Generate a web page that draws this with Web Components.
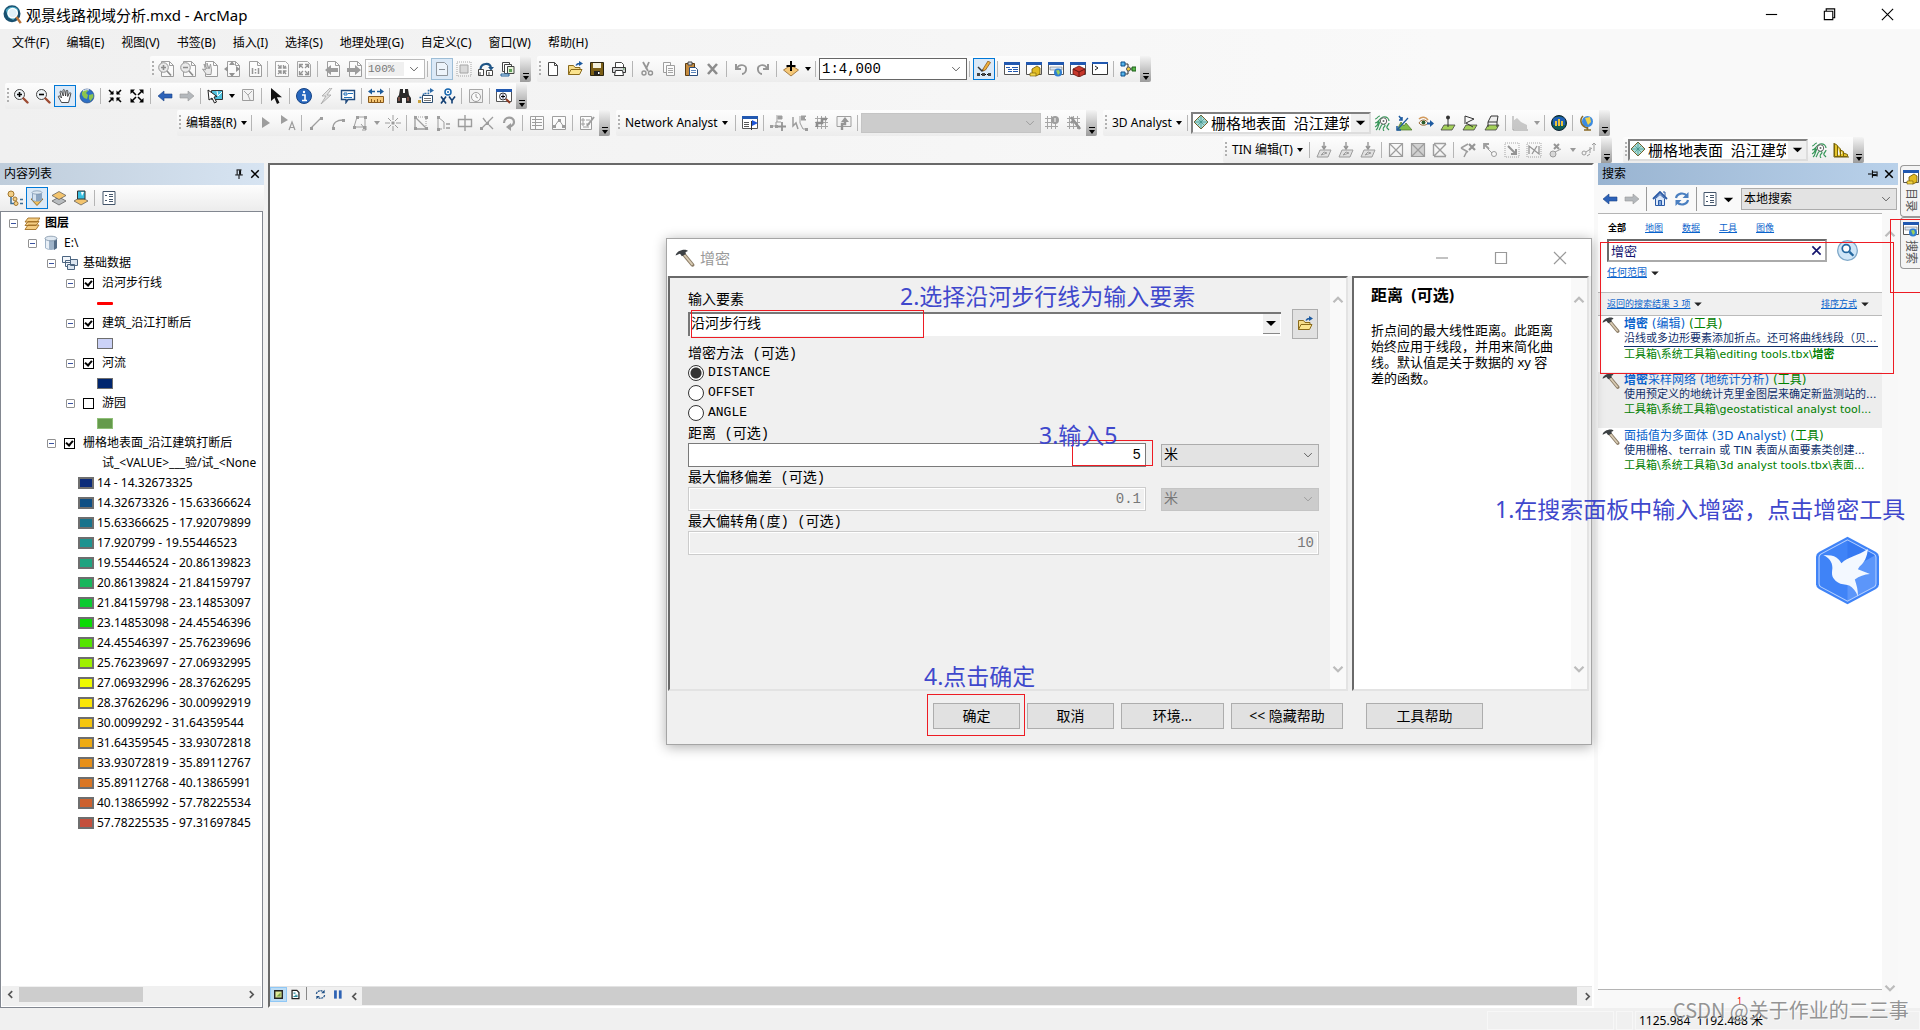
<!DOCTYPE html>
<html lang="zh-CN">
<head>
<meta charset="utf-8">
<title>观景线路视域分析.mxd - ArcMap</title>
<style>
html,body{margin:0;height:100%;overflow:hidden}
body{font:12px/16px "Noto Sans","Noto Sans CJK SC",sans-serif;color:#000}
</style>
</head>
<body>
<arc-app></arc-app>
<script>
const define = (name, css, html) => {
  customElements.define(name, class extends HTMLElement {
    constructor() {
      super();
      this.attachShadow({mode: 'open'});
    }
    connectedCallback() {
      const body = typeof html === 'function' ? html(this) : html;
      this.shadowRoot.innerHTML = `<style>*{box-sizing:border-box}button,input,select{font:inherit;color:inherit;margin:0}${css}</style>${body}`;
    }
  });
};

/* ---------- icons ---------- */
const page = '<path d="M3.5 1.5h6l3 3v10h-9z" fill="#fff" stroke="#444"/><path d="M9.500 1.500v3h3" fill="none" stroke="#444"/>';
const vpage = '<path d="M3.500 .5h8l4 4v11h-12z" fill="#fff" stroke="#444"/><path d="M11.500 .5v4h4" fill="none" stroke="#444"/>';
const dash = '<path d="M1 1h14v14H1z" fill="none" stroke="#555" stroke-dasharray="1 1"/>';
const win = '<path d="M.5 2.500h15v11H.5z" fill="#fff" stroke="#555"/><path d="M0 1h16v3H0z" fill="#2158b0"/>';
const lens = s => `<circle cx="6.500" cy="6.500" r="5" fill="#eef3f6" stroke="#444"/><path d="M10.500 10.500l4 4" stroke="#9c4a32" stroke-width="2.400" stroke-linecap="round"/><path d="${s}" stroke="#000" stroke-width="1.600"/>`;
const diamond = (y, f) => `<path d="M8 ${y}l7 4-7 4-7-4z" fill="${f}" stroke="#555" stroke-width=".7"/>`;
const slab = '<path d="M4 10h11l-3 5H1z" fill="#a4d05a" stroke="#444" stroke-width=".8"/>';
const grid = '<path d="M1 3.500h13M1 7.500h13M1 11.500h13M3.500 1v13M7.500 1v13M11.500 1v13" stroke="#555" fill="none"/>';
const arrows4 = d => `<path d="${d}" stroke="#000" stroke-width="1.600" fill="none"/>`;
const nodes = a => a.map(([x, y]) => `<path d="M${x - 1} ${y - 1}h3v3h-3z" fill="#444"/>`).join('');
const ICONS = {
  app: '<circle cx="8" cy="7" r="6.800" fill="#19506f"/><path d="M3 4c2-3 8-4 10 0l-1 5-3 3-4-2z" fill="#4da9c4"/><circle cx="8.500" cy="6.500" r="3.800" fill="#dff1f8" stroke="#fff"/><path d="M11.500 9.500l3.500 5" stroke="#b97338" stroke-width="2"/>',
  zin: lens('M4 6.500h5M6.500 4v5'), zout: lens('M4 6.500h5'),
  pzin: vpage + '<circle cx="5.500" cy="6.500" r="4.800" fill="#ddd" stroke="#333"/><path d="M3 6.500h5M5.500 4v5M9 10l4 4.500" stroke="#222" stroke-width="1.600"/>',
  pzout: vpage + '<circle cx="5.500" cy="6.500" r="4.800" fill="#ddd" stroke="#333"/><path d="M3 6.500h5M9 10l4 4.500" stroke="#222" stroke-width="1.600"/>',
  hand: '<path d="M4.500 14.500L1.500 9c-.5-1 .7-1.600 1.500-.7L4.500 10 3 4c0-1 1.300-1.200 1.700-.2L6.300 8 6 2.400c0-1.100 1.500-1.100 1.700 0L8.600 8l.6-5c.2-1 1.600-.9 1.600.1L10.700 8.500l1.600-3.400c.5-.9 1.700-.4 1.500.6L12.500 11l-1 3.500z" fill="#fff" stroke="#333" stroke-width=".9"/>',
  phand: vpage + '<path d="M4.500 13.500L.5 8l3 1-1.500-6L5 8V2l2 6 1.500-5 1 6-.5 4.500z" fill="#ddd" stroke="#444"/>',
  pfull: vpage + '<path d="M8 0l3 4H5zM8 16l3-4H5zM0 8l4-3v6zM16 8l-4-3v6z" fill="#333"/>',
  one: vpage + '<path d="M6.500 7v6M12.500 7v6M9.500 8v1.500M9.500 11v1.500" stroke="#333" stroke-width="1.500"/>',
  globe: '<circle cx="8" cy="8" r="7" fill="#2d6fc4" stroke="#1d3f77" stroke-width=".6"/><path d="M3 4c3-3 6-2 6-1L7 5l2 2-1 4-3-1-2-3zM10 7l4-1 .5 3-3 4-1.500-2z" fill="#8cc44e"/><path d="M4 3c2-1.500 5-1.500 6-1" stroke="#fff" fill="none"/>',
  shrink: arrows4('M2 2l4 4M14 2l-4 4M2 14l4-4M14 14l-4-4') + '<path d="M6.500 2.500v4h-4zM9.500 2.500v4h4zM6.500 13.500v-4h-4zM9.500 13.500v-4h4z"/>',
  grow: arrows4('M3 3l4 4M13 3L9 7M3 13l4-4M13 13L9 9') + '<path d="M1.500 1.500h4.500l-4.500 4.500zM14.500 1.500H10l4.500 4.500zM1.500 14.500V10l4.500 4.500zM14.500 14.500V10L10 14.500z"/>',
  pshrink: '<path d="M1.500 .5h10l3 3v12h-13z" fill="#fff" stroke="#555"/><path d="M4 4l3 3M12 5L9.500 7M4 13l3-3M12 13l-2.500-3M7 4v3H4M9.500 4v3h3M7 13v-3H4M9.500 13v-3h3" stroke="#333" stroke-width="1.300"/>',
  pgrow: '<path d="M1.500 .5h10l3 3v12h-13z" fill="#fff" stroke="#555"/><path d="M4 4l3 3M12 4L9 7M4 13l3-3M12 13l-3-3M3.500 7V3.500H7M9 3.500h3.500V7M3.500 10v3.500H7M9 13.500h3.500V10" stroke="#333" stroke-width="1.300"/>',
  back: '<path d="M1 8l6-5v3h8v4H7v3z" fill="#2c62b8" stroke="#1c4486" stroke-width=".6"/>',
  fwd: '<path d="M15 8L9 3v3H1v4h8v3z" fill="#b4b8bc" stroke="#999" stroke-width=".6"/>',
  pback: vpage + '<path d="M1 9l6-5v3h7v4H7v3z" fill="#444"/>', pfwd: vpage + '<path d="M15 9L9 4v3H1v4h8v3z" fill="#444"/>',
  draft: '<path d="M2.500 1.500h8l3 3v10h-11z" fill="#fff" stroke="#444"/><path d="M5 8.500h6" stroke="#333"/>',
  focus: dash + '<path d="M4 4h8v8H4z" fill="#bbb" stroke="#555"/>',
  swap: '<path d="M2.500 8C3 2 12 1 13 7" stroke="#1f5586" stroke-width="2.200" fill="none"/><path d="M10 6h6l-3 3.500z" fill="#1f5586"/><path d="M.5 8.500h5v6h-5z" fill="#fff" stroke="#444"/><path d="M8.500 9.500h6v5h-6z" fill="#fff" stroke="#444"/><path d="M2 14V11M11 14v-3" stroke="#444"/>',
  ddp: '<path d="M2.500 1.500h7v9h-7z" fill="#fff" stroke="#444"/><path d="M4.500 3.500h7v9h-7z" fill="#fff" stroke="#444"/><path d="M7.500 5.500h6.500v7H7.500z" fill="#e8f3dc" stroke="#444"/><path d="M9 8h3v3H9z" fill="#5fa15a"/><path d="M1 13h8v2H1z" fill="#cde3f5" stroke="#27659b"/>',
  doc: page,
  open: '<path d="M1.500 13.500v-9h5l1.500 2h5v2" fill="#f6dc8a" stroke="#8a6a1a"/><path d="M1.500 13.500L4 8.500h11l-2.500 5z" fill="#fbe48f" stroke="#8a6a1a"/><path d="M9 4.500c1-2 2.500-2 4-2" stroke="#1d5aa0" stroke-width="1.500" fill="none"/><path d="M12 0l4 2.500L12 5z" fill="#1d5aa0"/>',
  save: '<path d="M1.500 1.500h13v13h-13z" fill="#7c5f16" stroke="#2b2410"/><path d="M4 2h8v5H4z" fill="#f4f0dc"/><path d="M5 10h6v4H5z" fill="#222"/><path d="M9 11h1.500v2H9z" fill="#fff"/>',
  print: '<path d="M4.500 6V1.500h6l2 2V6" fill="#fff" stroke="#444"/><path d="M1.500 6.500h13v5h-13z" fill="#d7d9db" stroke="#333"/><path d="M4.500 9.500h7l1 5h-9z" fill="#fff" stroke="#333"/><path d="M12 8h1.500" stroke="#2a8a2a"/>',
  cut: '<path d="M4 1l5 9M10 1L7 8" stroke="#333" stroke-width="1.800"/><circle cx="5" cy="12" r="2" fill="none" stroke="#333" stroke-width="1.400"/><circle cx="11.500" cy="12" r="2" fill="none" stroke="#333" stroke-width="1.400"/>',
  copy: '<path d="M2.500 1.500h7v10h-7z" fill="#fff" stroke="#444"/><path d="M5.500 4.500h8v10h-8z" fill="#fff" stroke="#444"/><path d="M7 7.500h5M7 9.500h5M7 11.500h5" stroke="#555"/>',
  paste: '<path d="M2.500 2.500h9v12h-9z" fill="#c58c40" stroke="#5c3c10"/><path d="M5 1h4v3H5z" fill="#ddd" stroke="#444"/><path d="M6.500 6.500h6l2 2v6h-8z" fill="#fff" stroke="#2a4d7c"/><path d="M8 9.500h5M8 11.500h5" stroke="#5a85bb"/>',
  del: '<path d="M3 3l9 10M12 3L3 13" stroke="#222" stroke-width="2.600"/>',
  undo: '<path d="M3 3v5h5" fill="none" stroke="#333" stroke-width="2"/><path d="M4 7c3-5 10-3 9 2-.3 2-2 4-4 4" fill="none" stroke="#333" stroke-width="1.800"/>',
  redo: '<path d="M13 3v5H8" fill="none" stroke="#333" stroke-width="2"/><path d="M12 7C9 2 2 4 3 9c.3 2 2 4 4 4" fill="none" stroke="#333" stroke-width="1.800"/>',
  add: '<path d="M8 4l7.500 5L8 15 .5 9z" fill="#f5c878" stroke="#93652a" stroke-width=".8"/><path d="M8 0v10M3.500 5h9" stroke="#000" stroke-width="2"/>',
  edit: '<path d="M2 13.500h12" stroke="#000" stroke-dasharray="2 1"/>' + nodes([[2, 13], [7, 13], [13, 13]]) + '<path d="M2 6l4 4 2-2" stroke="#333" stroke-width="1.500" fill="none"/><path d="M7 8l5-8 2.500 1.500L9.500 9 7 10z" fill="#f0b03c" stroke="#7a4a16" stroke-width=".7"/>',
  wtoc: win + '<path d="M2 6.500h4M8 6.500h6M4 8.500h4M9 8.500h5M4 10.500h4M9 10.500h5" stroke="#2158b0"/>',
  wcat: win + '<path d="M6 13V8l5-3 3 2v6l-4 2z" fill="#e2bb22" stroke="#6e5505" stroke-width=".8"/><path d="M4 12h6v3H4z" fill="#f2d648" stroke="#6e5505" stroke-width=".6"/>',
  wsearch: win + '<path d="M2 6h12v3H2z" fill="#dbe7f5" stroke="#777" stroke-width=".6"/><circle cx="10" cy="11.500" r="4" fill="#2f7ed2"/><path d="M8 9.500l3-.5 1 3-2 2z" fill="#9bd05c"/>',
  wtool: win + '<path d="M3 8l6-3 6 3v5l-6 3-6-3z" fill="#c7372b" stroke="#641410" stroke-width=".8"/><path d="M3 8l6 3 6-3M9 11v5" stroke="#641410" fill="none"/>',
  wpy: '<path d="M.5 1.500h15v12H.5z" fill="#fff" stroke="#333"/><path d="M0 1h16v2H0z" fill="#2158b0"/><path d="M3 5l3 2-3 2" stroke="#222" fill="none"/>',
  model: '<path d="M4 3h4v5h4M4 13h4V8" stroke="#333" fill="none"/><path d="M1 1h4v4H1zM1 11h4v4H1z" fill="#54b4ea" stroke="#0e4f8a"/><circle cx="8.500" cy="8" r="2" fill="#f2cc3e" stroke="#555"/><path d="M12 6h4v4h-4z" fill="#58b84a" stroke="#1d5f19"/>',
  selfeat: '<path d="M4.500 2.500h11v9h-11z" fill="#4fc0dd" stroke="#333"/><path d="M10 3l1 5 4-4" stroke="#fff" fill="none"/><path d="M1 2l1 10 3-2 2.500 5 2-1-2.500-5 3-.5z" fill="#fff" stroke="#222"/>',
  clearsel: '<path d="M2.500 1.500h11v11h-11z" fill="#eee" stroke="#444"/><path d="M4 3l4 4 4-4M8 7l2 5" stroke="#555" fill="none"/>',
  ptr: '<path d="M3 0v13l3.500-3 2.500 6 2.500-1.200-2.600-5.500H14z" fill="#111"/>',
  eptr: '<path d="M4 2v11l8-5z" fill="#444"/>', eptra: '<path d="M1 0v9l7-4z" fill="#444"/><path d="M9 15l3-8 3 8M10 12.500h4" stroke="#444" fill="none" stroke-width="1.200"/>',
  info: '<circle cx="8" cy="8" r="7.500" fill="#2767be" stroke="#174485"/><path d="M6 7h3v5M6 12.500h5" stroke="#fff" stroke-width="1.600" fill="none"/><circle cx="8" cy="4" r="1.200" fill="#fff"/>',
  bolt: '<path d="M12 0L4 8h4l-5 8 10-9H9l5-7z" fill="#ccc" stroke="#555" stroke-width=".8"/>',
  html: '<path d="M1.500 2.500h13v9H8l-2 3v-3H1.500z" fill="#fff" stroke="#1f4a7d" stroke-width="1.400"/><path d="M4 5h3v2H4zM8 5.500h5M4 9.500h8" stroke="#1f6fb8" fill="none"/>',
  measure: '<path d="M2 3.500h5M9 3.500h5" stroke="#1c5c9c" stroke-width="1.600"/><path d="M4 .5v6L0 3.500zM12 .5v6l4-3z" fill="#1c5c9c"/><path d="M.5 8.500h15v6H.5z" fill="#f6c774" stroke="#8a5a1c"/><path d="M3.500 11v3M6.500 12v2M9.500 11v3M12.500 12v2" stroke="#8a5a1c"/>',
  find: '<path d="M4 1h3v4h2V1h3l1 6 2 3v5h-5v-5H6v5H1v-5l2-3z" fill="#2b2b2b"/><path d="M3 9v4M12 9v4" stroke="#b96c5b"/>',
  route: '<path d="M1.500 9.500h4v-4h5v-3h3" stroke="#2b6aa8" stroke-dasharray="2 1" fill="none" stroke-width="1.500"/><path d="M12 0l4 2.500L12 5z" fill="#2b6aa8"/><path d="M4.500 7.500h10v7h-10z" fill="#fff" stroke="#2b4d70"/><path d="M6 10.500h7M6 12.500h7" stroke="#777"/><path d="M0 12h3v3H0z" fill="#c9a23c"/>',
  xy: '<circle cx="8" cy="4" r="3" fill="#fff" stroke="#1565ae" stroke-width="1.500"/><circle cx="8" cy="4" r="1" fill="#1565ae"/><path d="M1 8.500l5 7M6 8.500l-5 7M9 8.500l3 4 3-4M12 12v3.500" stroke="#123f73" stroke-width="1.600" fill="none"/>',
  clock: '<path d="M1.500 1.500h13v13h-13z" fill="#eee" stroke="#555"/><circle cx="8" cy="9" r="4.500" fill="#fff" stroke="#444"/><path d="M8 6v3l2 1" stroke="#444" fill="none"/>',
  viewer: win + '<circle cx="7" cy="8.500" r="3.500" fill="#eef" stroke="#333"/><path d="M5 8.500h4M7 6.500v4" stroke="#000"/><path d="M10 11l4 4" stroke="#8c3a24" stroke-width="2"/>',
  line: '<path d="M3 13L13 3" stroke="#444" stroke-width="1.300"/>' + nodes([[3, 13], [13, 3]]),
  arc: '<path d="M3 13C3 8 7 5 13 5" stroke="#444" stroke-width="1.300" fill="none"/>' + nodes([[3, 13], [13, 5]]),
  trace: '<path d="M5 2h8v10H2z" stroke="#444" fill="none"/>' + nodes([[5, 2], [13, 2], [2, 12], [12, 12]]) + '<path d="M9 9l5 6M14 11v4h-4" stroke="#444" fill="none"/>',
  point: '<path d="M8 0v5M8 11v5M0 8h5M11 8h5M3 3l3 3M13 3l-3 3M3 13l3-3M13 13l-3-3" stroke="#444"/><path d="M6.500 6.500h3v3h-3z" fill="#444"/>',
  verts: '<path d="M2 2v12h12zM2 2l12 12" stroke="#444" fill="none" stroke-width="1.300"/><path d="M3 2h10v10" stroke="#444" stroke-dasharray="1 1" fill="none"/>' + nodes([[2, 2], [13, 2], [2, 13], [13, 13]]),
  reshape: '<path d="M3 1v13h4M3 2l6 5v7" stroke="#444" fill="none"/>' + nodes([[3, 2], [3, 14]]) + '<path d="M12 8v2M12 12v2M14 8v2M14 12v2" stroke="#444" stroke-width="1.500"/>',
  cutpoly: '<path d="M1.500 4.500h13v7h-13zM8 0v16" stroke="#444" stroke-width="1.400" fill="none"/>',
  split: '<path d="M2 14L14 2M4 3l3 4M10 10l4 4" stroke="#444" stroke-width="1.300"/>' + nodes([[2, 13], [8, 8]]),
  rotate: '<path d="M3 8c0-7 10-7 10-1 0 3-2 4-5 5" stroke="#444" stroke-width="2.200" fill="none"/><path d="M5 12l5-4v8z" fill="#444"/>',
  attrs: '<path d="M1.500 1.500h13v13h-13z" fill="#fff" stroke="#444"/><path d="M3 4.500h10M3 7.500h10M3 10.500h10M6.500 2v12" stroke="#444"/>',
  sketch: '<path d="M1.500 1.500h13v13h-13z" fill="#fff" stroke="#444"/><path d="M3 12l5-7 5 7" stroke="#444" fill="none"/>' + nodes([[3, 11], [8, 5], [12, 11]]),
  create: '<path d="M1.500 1.500h11v13h-11z" fill="#fff" stroke="#444"/><path d="M3 4h2v2H3zM3 8h2v2H3zM7 5h4M7 9h4M4 12h6" stroke="#444" fill="none"/><path d="M8 11l7-9" stroke="#444" stroke-width="2"/>',
  nawin: win + '<path d="M2 7.500h5M2 9.500h5M2 11.500h5" stroke="#555"/><path d="M9.500 6v9" stroke="#333"/><path d="M10 5l6 3-6 3z" fill="#1f56d8"/>',
  naloc: '<path d="M1 11h5M6 11V7h5" stroke="#444" fill="none"/>' + nodes([[1, 11], [6, 11]]) + '<path d="M7 0v7M8 1h4v3H8z" stroke="#444" fill="#444"/><path d="M12 7v9M8 11.500h8" stroke="#333" stroke-width="1.800"/>',
  nasel: '<path d="M8 1v7M9 1h5l-2 2 2 2H9" fill="#444" stroke="#444"/><path d="M1 2v9l3-3 2 6" stroke="#444" fill="none" stroke-width="1.500"/><path d="M8 8l3 6h4" stroke="#444" fill="none"/>' + nodes([[14, 14]]),
  nasolve: grid + '<path d="M3 12V8h5V4h5" stroke="#222" stroke-width="2.600" fill="none"/>',
  nadir: '<path d="M1 1.500h14v10H1z" fill="#eee" stroke="#444"/><path d="M6 15V9h3V6" stroke="#333" stroke-width="2.400" fill="none"/><path d="M5 7l4-5 4 5z" fill="#333"/>',
  nainfo: grid + '<circle cx="11" cy="5" r="4" fill="#444"/><path d="M11 3v4" stroke="#fff"/>', nabuild: grid + '<path d="M5 2l9 12M8 5l-3 3" stroke="#333" stroke-width="2.600"/>',
  tin: '<path d="M8 1l7 7-7 7-7-7z" fill="#a7dbd6" stroke="#7a5a20"/><path d="M4.500 4.500l7 7M11.500 4.500l-7 7M8 1v14M1 8h14" stroke="#3c8f86" stroke-width=".7"/>',
  contour: '<path d="M1 4c3 0 2-3 5-3M1 8c4 0 3-4 8-6 4-1 6 2 6 4M1 12c3-1 3-4 4-6M2 15c3-2 2-6 4-8M5 15c2-2 1-5 4-6 3 0 2 2 1 3s-1 3 0 4M15 8c0 2-3 3-2 5l2 2" stroke="#38975a" stroke-width="1.200" fill="none"/><circle cx="9.500" cy="6" r="3.200" fill="#fff" stroke="#666"/><circle cx="9.500" cy="6" r="1" fill="#666"/>',
  steep: '<path d="M1 15l4-8 3 4 2-3 6 7z" fill="#7fbd4a" stroke="#47701f" stroke-width=".7"/><path d="M2 14L12 3" stroke="#1d5aa0" stroke-width="1.200"/><path d="M3 1l3 4M6 2v3H3M1 11v4h4" stroke="#1d5aa0" fill="none" stroke-width="1.500"/>',
  los: '<path d="M1 8c2-4 7-4 9 0-2 3-7 3-9 0z" fill="#fff" stroke="#9a6a3a"/><circle cx="5.500" cy="7.500" r="2" fill="#2c5c2a"/><path d="M1 4c3-3 7-2 9 1" stroke="#d29a5c" fill="none" stroke-width="1.500"/><path d="M9 8.500h4" stroke="#1d5aa0" stroke-width="2"/><path d="M12 5l4 3.500-4 3.500z" fill="#1d5aa0"/>',
  ipoint: slab + '<path d="M8 3v9" stroke="#333"/><circle cx="8" cy="2.500" r="2" fill="#333"/>',
  iline: slab + '<path d="M3 1l9 3-8 4 7 4M3 1v8" stroke="#333" fill="none"/>', ipoly: slab + '<path d="M7 1h7l-1 6H4zM4 7v5M13 7v5" stroke="#333" fill="#eee"/>',
  profile: '<path d="M1 1v14h15" stroke="#444" fill="none"/><path d="M1 14V6l4-3 4 4 6 3v4z" fill="#999"/>',
  scene: '<circle cx="8" cy="8" r="7.500" fill="#0f5c56" stroke="#123"/><path d="M2 4c3-3 9-3 12 0v6H2z" fill="#1d5fb4"/><path d="M4 11V6h2v5M7 11V4h2v7M10 11V6h2v5" fill="#e8c43c"/>',
  gl: '<circle cx="8.500" cy="6.500" r="5.500" fill="#3c8ae0"/><path d="M6 3l5-1 1 5-3 3z" fill="#f0d24c"/><path d="M4 1C0 5 2 11 8 13M5 15h7M8.500 12v3" stroke="#8a6a24" stroke-width="1.600" fill="none"/>',
  tinadd: '<path d="M4 8h11l-3 7H1z" fill="#ccc" stroke="#444"/><path d="M5 13l3-3 3 1z" fill="#fff" stroke="#444"/><path d="M8 0v6M6 4l2 3 2-3" stroke="#333" stroke-width="1.400" fill="none"/>',
  xbox: '<path d="M1.500 1.500h13v13h-13zM2 2l12 12M14 2L2 14" stroke="#444" fill="none" stroke-width="1.200"/>',
  xboxf: '<path d="M1.500 1.500h13v13h-13z" fill="#aaa"/><path d="M1.500 1.500h13v13h-13zM2 2l12 12M14 2L2 14" stroke="#444" fill="none" stroke-width="1.200"/>',
  xbox3: '<path d="M2 2l12 12M14 2L2 14M2 14.500h12M2 1.500h12M1.500 2v12" stroke="#444" fill="none" stroke-width="1.400"/>',
  brk: '<path d="M1 6l7-4M1 6l7 4M4 15l3-6" stroke="#444" stroke-width="1.500" fill="none"/><path d="M9 2l6 6M15 2L9 8" stroke="#333" stroke-width="2.200"/>',
  swapn: '<path d="M2 2l5 5M2 7V2h5" stroke="#444" stroke-width="1.800" fill="none"/><circle cx="12" cy="12" r="2.500" fill="#fff" stroke="#444"/><path d="M6 7l4 4" stroke="#444"/>',
  dotbox: dash + '<path d="M4 4l8 8M12 7v5H7" stroke="#333" stroke-width="2" fill="none"/>', dotx: dash + '<path d="M3 12V4l10 8V4M6 12l5-8" stroke="#333" stroke-width="1.300" fill="none"/>',
  delnode: '<circle cx="5" cy="12" r="3" fill="#bbb" stroke="#444"/><path d="M7 10l6-3" stroke="#444"/><path d="M6 2l5 5M11 2L6 7" stroke="#333" stroke-width="2"/>',
  mv: '<circle cx="3" cy="11" r="2" fill="none" stroke="#444"/><path d="M5 10l6-4M13 1v8M11 3l2-2 2 2M6 14l3-2M9 5v6" stroke="#444" fill="none"/>',
  hist: '<path d="M1 1v14h15" stroke="#6b5a0c" fill="none"/><path d="M1.500 14.500V1.500l3 2v11M4.500 4l3 3v7.500M7.500 8l3 1.500v5M10.500 11l4 1.500v2H1.500" fill="#e6c52c" stroke="#7a6508"/>',
  bydraw: '<circle cx="4" cy="4" r="3" fill="#f3cf86" stroke="#a1762e"/><circle cx="8" cy="9" r="2" fill="#f3cf86" stroke="#a1762e"/><circle cx="9" cy="13.500" r="2" fill="#f3cf86" stroke="#a1762e"/><path d="M4 7v6.500h3M13 9.500h3M13 13.500h3" stroke="#3d6d94" stroke-width="1.500" fill="none"/>',
  bysrc: '<path d="M2 9l6 6.500L14 9z" fill="#f0c05c" stroke="#95702c"/><path d="M3 2h10v8c-2 2-8 2-10 0z" fill="#8ba5c2"/><path d="M4 3h3v8l-3-1z" fill="#d4e1ee"/><ellipse cx="8" cy="2.500" rx="5" ry="1.700" fill="#dde8f2" stroke="#66809c" stroke-width=".6"/>',
  byvis: diamond(7, '#b9bdc0') + diamond(1.500, '#f3c46e'),
  bysel: diamond(7, '#f3c46e') + '<path d="M4.500 1h7.500v8H4.500z" fill="#38bfe0" stroke="#333"/><path d="M8 2l3 0-2 4z" fill="#fff"/>',
  opts: '<path d="M2 1.500h12v13H2z" fill="#fff" stroke="#44566b"/><path d="M4 5.500h2M4 10.500h2M8 4.500h4M8 6.500h4M8 9.500h4M8 11.500h4" stroke="#44566b"/>',
  layers: '<path d="M4 3h12l-3 4H1zM4 6.500h11l-3 4H1zM4 10h11l-3 4.500H1z" fill="#f4cd83" stroke="#a16f24" stroke-width=".9"/>',
  db: '<path d="M2 3v10c2 2.600 10 2.600 12 0V3z" fill="#9fb3c8"/><path d="M3 4h3v10l-3-1z" fill="#e9f0f7"/><path d="M11 4h3v9l-3 2z" fill="#566d87"/><ellipse cx="8" cy="3.500" rx="6" ry="2.300" fill="#dfe8f1" stroke="#71869c" stroke-width=".7"/>',
  group: '<path d="M.5 1.500h8v6h-8zM3.500 5.500h8v6h-8z" fill="#f1f5fa" stroke="#4b6480"/><path d="M8.500 4.500h7v6h-7zM5.500 9.500h7v5h-7z" fill="#dbe5f0" stroke="#4b6480"/>',
  home: '<path d="M1 8l7-7 7 7" stroke="#2a5aa6" stroke-width="1.800" fill="none"/><path d="M3.500 7.500L8 3.500l4.500 4v7h-9z" fill="#dce9fb" stroke="#2a5aa6"/><path d="M6.500 9.500h3v5h-3z" fill="#7fa7dd" stroke="#2a5aa6"/><path d="M11 1h2v4" stroke="#2a5aa6" fill="none"/>',
  refresh: '<path d="M2 7c1-5 8-6 11-2M14 9c-1 5-8 6-11 2" stroke="#4a7fc0" stroke-width="2.200" fill="none"/><path d="M14.500 1v6h-6zM1.500 15V9h6z" fill="#4a7fc0"/>',
  mapv: '<path d="M2.500 2.500h11v11h-11z" fill="#dfe89a" stroke="#222" stroke-width="2"/><path d="M5 11l6-6v6z" fill="#7da646"/>',
  lay: '<path d="M3 2h7l3 3v9H3z" fill="#fff" stroke="#222" stroke-width="1.800"/><path d="M5 6h3M7 9h4M5 11h6" stroke="#2a8a9c" stroke-width="1.500"/>',
  rfr: '<path d="M2 7c1-5 8-6 11-2M14 9c-1 5-8 6-11 2" stroke="#1d4f86" stroke-width="1.800" fill="none" stroke-dasharray="3 1"/><path d="M14 1v5H9zM2 15v-5h5z" fill="#1d4f86"/>',
  pause: '<path d="M3 2h4v12H3z" fill="#2d62b4"/><path d="M10 2h4v12h-4z" fill="#2d62b4"/>',
  hammer: '<path d="M7 5l7 8.500" stroke="#8b7c66" stroke-width="3" stroke-linecap="round"/><path d="M7 5l7 8.500" stroke="#d9ccb4" stroke-width="1.400"/><path d="M.5 6C1 3 5 1 9 1.500 11 1.800 10 3 8.500 3.200L8.500 5 5.500 6.500 4 4.500C3 4.800 2 5.500.5 6z" fill="#3d4144"/>',
  mag: '<circle cx="8" cy="8" r="7.500" fill="#cfe6f8" stroke="#7fa8c8"/><circle cx="7" cy="6.500" r="3" fill="#fff" stroke="#23679f" stroke-width="1.300"/><path d="M9.500 9l3 3" stroke="#23679f" stroke-width="1.800"/>',
  pin: '<path d="M4 1.500h8M5 2v7M10.500 2v7M2 9.500h12M8 10v6M9 2v7" stroke="#000" stroke-width="1.600" fill="none"/>',
  pinh: '<path d="M14.500 4v8M14 5H7M14 10.500H7M7 2v12M6 8H0M14 9H7" stroke="#000" stroke-width="1.600" fill="none"/>',
  x: '<path d="M2 2l12 12M14 2L2 14" stroke="currentColor" stroke-width="2.400"/>',
  thinx: '<path d="M2 2l12 12M14 2L2 14" stroke="currentColor" stroke-width="1.200"/>',
  min: '<path d="M2 8h12" stroke="currentColor" stroke-width="1.200"/>', max: '<path d="M2.500 2.500h11v11h-11z" stroke="currentColor" fill="none" stroke-width="1.200"/>',
  restore: '<path d="M2.500 4.500h9v9h-9zM4.500 4V2h9v9.500h-2" stroke="currentColor" fill="none" stroke-width="1.200"/>',
  down: '<path d="M3 6h10l-5 5z" fill="currentColor"/>',
  chu: '<path d="M2 11l6-6 6 6" stroke="currentColor" stroke-width="3" fill="none"/>', chd: '<path d="M2 5l6 6 6-6" stroke="currentColor" stroke-width="3" fill="none"/>',
  chl: '<path d="M11 2L5 8l6 6" stroke="currentColor" stroke-width="3" fill="none"/>', chr: '<path d="M5 2l6 6-6 6" stroke="currentColor" stroke-width="3" fill="none"/>',
  thd: '<path d="M2 5l6 6 6-6" stroke="currentColor" stroke-width="1.500" fill="none"/>',
  bird: '<path d="M8 .2l6.600 3.500q.7.400.7 1.100v6.400q0 .7-.7 1.100L8 15.800 1.400 12.300Q.7 11.900.7 11.200V4.800q0-.7.7-1.100z" fill="#3f83f7"/><path d="M8 8l6.500-3.600v7.400L8 15z" fill="#6fa4fb" opacity=".6"/><path d="M8 8V1l6.500 3.400z" fill="#2f73ee" opacity=".6"/><path d="M8 .9l6.200 3.300q.4.300.4.700v6.200q0 .5-.4.700L8 15.100 1.800 11.800q-.4-.2-.4-.7V4.900q0-.4.4-.7z" fill="none" stroke="#b5d0ff" stroke-width=".25"/><path d="M2.400 4.400L4.200 4.500Q5.600 4.600 6.600 6.300C8 4.800 10.500 4.600 12.700 3c-.1 1.800-.8 3.100-1.900 4.100l-.4.600 2.800 1.100c-1.300.1-2.500.5-3.500 1.300.4 1.300.8 2.500.7 3.900-.4-1.200-1.200-2-2-2.500-1-.3-1.900-.2-2.600-.7C4.300 9.700 4.300 9 4.500 7.400 4.500 5.900 3.600 5 2.400 4.400z" fill="#f3f8ff"/>'
};
define('ui-icon', ':host{display:inline-block;width:16px;height:16px;flex:none}svg{display:block;width:100%;height:100%}',
  el => `<svg viewBox="0 0 16 16" fill="none" aria-hidden="true">${(ICONS[el.getAttribute('name')] || '').replace(/<path d="([^"]*)"\/>/g, '<path d="$1" fill="#000"/>')}</svg>`);

/* ---------- toolbar pieces ---------- */
define('tool-button', `:host{display:block;flex:none}
button{width:22px;height:22px;padding:3px;border:0;background:none;display:block}
:host([active]) button{padding:2px;border:1px solid #0078d7;background:#dbe9f7}
:host([active][disabled]) button{border-color:#9dbdd6}
:host([disabled]) ui-icon{filter:grayscale(1) opacity(.5)}
ui-icon{display:block}`,
  el => `<button type="button" aria-label="${el.getAttribute('icon')}"><ui-icon name="${el.getAttribute('icon')}"></ui-icon></button>`);
define('tool-sep', ':host{display:block;width:6px;flex:none;height:16px}i{display:block;width:1px;height:16px;margin-left:2px;background:#b5b5b5}', '<i></i>');
define('tool-arrow', ':host{display:block;flex:none}button{width:11px;height:22px;border:0;padding:0;background:none;display:grid;place-items:center}i{display:block;width:0;border:3px solid transparent;border-top:4px solid #000;border-bottom:0}:host([disabled]) i{border-top-color:#999}', '<button type="button" aria-label="more"><i></i></button>');
define('tool-menu', ':host{display:block;flex:none}button{width:100%;height:22px;border:0;background:none;padding:0 0 0 4px;display:flex;align-items:center;gap:4px;white-space:nowrap}i{width:0;border:3px solid transparent;border-top:4px solid #000;border-bottom:0}', '<button type="button"><slot></slot><i></i></button>');
define('tool-bar', `:host{display:flex;align-items:center;height:26px;flex:none;background:linear-gradient(#fdfdfd,#f6f6f6 50%,#ececec);padding-left:5px;position:relative;border-radius:2px}
.grip{position:absolute;left:2px;top:5px;width:2px;height:16px;background:repeating-linear-gradient(#b0b0b0 0 2px,transparent 2px 4px)}
.over{width:11px;height:26px;margin-left:1px;border:0;padding:15px 0 0;background:linear-gradient(#f4f4f4,#9c9c9c);border-radius:0 2px 2px 0}
.over b{display:block;width:6px;height:1px;background:#000;margin:0 auto 2px}
.over i{display:block;margin:auto;width:0;border:3px solid transparent;border-top:4px solid #000;border-bottom:0}`,
  '<span class="grip"></span><slot></slot><button class="over" type="button" aria-label="options"><b></b><i></i></button>');
define('drop-down', `:host{display:block;position:relative;flex:none;height:22px}
select{appearance:none;width:100%;height:100%;border:1px solid #acacac;background:#fff;padding:0 22px 0 2px;border-radius:0;display:block;opacity:1}
ui-icon{position:absolute;right:6px;top:calc(50% - 5px);width:10px;height:10px;color:#555;pointer-events:none}
:host([kind=scale]) select{border-color:#666;font:14px "Liberation Mono",monospace}
:host([kind=off]) select{background:#ccc;border-color:#c4c4c4;color:#777}
:host([kind=off]) ui-icon{color:#999}
:host([kind=btn]) select{background:#e3e3e3;border-color:#acacac}
:host([kind=pct]) select{border-color:#bbb;color:#777;font:11px "Liberation Mono",monospace;background:linear-gradient(#f0f0f0,#f0f0f0) 2px 2px/36px 14px no-repeat #fff}
:host([kind=layer]) select{border:2px solid;border-color:#808080 #ddd #ddd #808080;font-size:15px;padding:0 20px 0 18px;background:linear-gradient(#f0f0f0,#f0f0f0) right/18px 100% no-repeat #fff}
:host([kind=layer]) ui-icon{color:#000;right:3px;width:15px;height:15px;top:3px}
:host([kind=layer]) ui-icon.l{left:2px;right:auto;top:2px;width:16px;height:16px}`,
  el => { const k = el.getAttribute('kind'); return `${k === 'layer' ? '<ui-icon class="l" name="tin"></ui-icon>' : ''}<select aria-label="${el.getAttribute('label') || 'list'}" ${el.hasAttribute('disabled') ? 'disabled' : ''}><option>${el.getAttribute('value') || ''}</option></select><ui-icon name="${k === 'layer' ? 'down' : 'thd'}"></ui-icon>`; });
const tb = s => s.trim().split(/\s+/).map(t => {
  if (t === '|') return '<tool-sep></tool-sep>';
  if (t === 'v') return '<tool-arrow></tool-arrow>';
  if (t === '-v') return '<tool-arrow disabled></tool-arrow>';
  const a = t[0] === '*' || t[1] === '*', d = t[0] === '-';
  return `<tool-button icon="${t.replace(/^[-*]+/, '')}"${a ? ' active' : ''}${d ? ' disabled' : ''}></tool-button>`;
}).join('');

/* ---------- frame ---------- */
define('app-title', `:host{display:flex;align-items:center;height:29px;background:#fff;flex:none;padding:0 6px 0 2px;gap:4px;font-size:15px}
ui-icon.a{width:20px;height:20px}span{flex:1}button{width:54px;height:29px;border:0;background:none;padding:0;display:grid;place-items:center}button ui-icon{width:15px;height:15px}`,
  '<ui-icon class="a" name="app"></ui-icon><span><slot></slot></span><button type="button" aria-label="min"><ui-icon name="min"></ui-icon></button><button type="button" aria-label="restore"><ui-icon name="restore"></ui-icon></button><button type="button" aria-label="close"><ui-icon name="thinx"></ui-icon></button>');
define('app-menu', ':host{display:flex;height:27px;align-items:center;gap:17px;padding-left:12px;flex:none}button{border:0;background:none;padding:0;white-space:nowrap}',
  ['文件(F)', '编辑(E)', '视图(V)', '书签(B)', '插入(I)', '选择(S)', '地理处理(G)', '自定义(C)', '窗口(W)', '帮助(H)'].map(t => `<button type="button">${t}</button>`).join(''));
define('app-toolbars', ':host{display:flex;flex-direction:column;gap:1px;flex:none}.r{display:flex;height:26px;gap:6px}.r1{padding-left:150px}.r2{padding-left:5px}.r3{padding-left:177px}.r4{padding-left:1223px;gap:11px}',
  `<div class="r r1"><tool-bar>${tb('-pzin -pzout -phand -pfull -one | -pshrink -pgrow | -pback -pfwd')}<drop-down kind="pct" value="100%" style="width:60px;height:20px"></drop-down>${tb('| -*draft -focus swap ddp')}</tool-bar>
<tool-bar>${tb('doc open save print | -cut -copy paste -del | -undo -redo | add v |')}<drop-down kind="scale" value="1:4,000" style="width:148px"></drop-down>${tb('| *edit | wtoc wcat wsearch wtool wpy | model')}</tool-bar></div>
<div class="r r2"><tool-bar>${tb('zin zout *hand globe | shrink grow | back fwd | selfeat v -clearsel | ptr | info -bolt html | measure | find route xy | -clock | viewer')}</tool-bar></div>
<div class="r r3"><tool-bar><tool-menu style="width:67px">编辑器(R)</tool-menu>${tb('| -eptr -eptra | -line -arc -trace -v -point | -verts -reshape -cutpoly -split -rotate | -attrs -sketch | -create')}</tool-bar>
<tool-bar><tool-menu style="width:112px">Network Analyst</tool-menu>${tb('| nawin | -naloc -nasel -nasolve -nadir |')}<drop-down kind="off" disabled style="width:180px;height:20px"></drop-down>${tb('-nainfo -nabuild')}</tool-bar>
<tool-bar><tool-menu style="width:77px">3D Analyst</tool-menu>${tb('|')}<drop-down kind="layer" value="栅格地表面&nbsp; 沿江建筑" style="width:180px"></drop-down>${tb('contour steep los ipoint iline ipoly | -profile -v | scene | gl')}</tool-bar></div>
<div class="r r4"><tool-bar><tool-menu style="width:79px">TIN 编辑(T)</tool-menu>${tb('| -tinadd -tinadd -tinadd | -xbox -xboxf -xbox3 | -brk -swapn -dotbox -dotx -delnode -v -mv')}</tool-bar>
<tool-bar><drop-down kind="layer" value="栅格地表面&nbsp; 沿江建筑" style="width:180px"></drop-down>${tb('contour hist')}</tool-bar></div>`);

define('panel-title', ':host{display:flex;align-items:center;height:22px;padding:0 4px;gap:6px;background:linear-gradient(90deg,#bfcddb,#d7e4f2);flex:none}:host([live]){background:linear-gradient(90deg,#99b4d1,#b9d1ea)}span{flex:1}button{width:10px;height:10px;padding:0;border:0;background:none}ui-icon{width:10px;height:10px;display:block}',
  el => `<span><slot></slot></span><button type="button" aria-label="pin"><ui-icon name="${el.hasAttribute('live') ? 'pinh' : 'pin'}"></ui-icon></button><button type="button" aria-label="close"><ui-icon name="x"></ui-icon></button>`);

/* ---------- table of contents ---------- */
define('tree-row', `:host{display:flex;align-items:center;height:20px;white-space:nowrap;padding-left:8px}
.e{width:9px;height:9px;border:1px solid #919191;background:#fff;padding:0;flex:none;display:grid;place-items:center;border-radius:1px}
.e i{width:5px;height:1px;background:#3a52a0}
ui-icon,input,label{flex:none}ui-icon{margin-left:6px}.t{margin-left:5px}
input{appearance:none;width:11px;height:11px;border:1px solid #000;background:#fff;margin:0 0 0 8px;position:relative}
input:checked::after{content:"";position:absolute;left:2px;top:0;width:3px;height:5px;border:solid #000;border-width:0 2px 2px 0;transform:rotate(40deg)}
label{padding-left:8px}:host([bold]){font-weight:bold}`,
  el => {
    const ic = el.getAttribute('icon'), c = el.getAttribute('check');
    return `<button class="e" type="button" aria-label="collapse"><i></i></button>${ic ? `<ui-icon name="${ic}"></ui-icon><span class="t"><slot></slot></span>` : `<input id="c" type="checkbox" ${c === 'on' ? 'checked' : ''}><label for="c"><slot></slot></label>`}`;
  });
define('tree-symbol', ':host{display:flex;align-items:center;height:20px;white-space:nowrap;padding-left:77px;gap:3px}i{width:16px;height:12px;border:2px solid #6e6e6e;background:var(--c);flex:none}:host([leaf]){padding-left:96px}:host([leaf]) i{width:16px;height:11px;border-width:1px}:host([leaf=line]) i{height:3px;border:0;border-radius:1px}:host([leaf=park]) i{border-color:#8fbf78}',
  '<i></i><slot></slot>');
const CLASSES = [['14 - 14.32673325', '#0c2c7a'], ['14.32673326 - 15.63366624', '#0f4f84'], ['15.63366625 - 17.92079899', '#18738c'], ['17.920799 - 19.55446523', '#1e9390'], ['19.55446524 - 20.86139823', '#1fa380'], ['20.86139824 - 21.84159797', '#18b65c'], ['21.84159798 - 23.14853097', '#0bcb30'], ['23.14853098 - 24.45546396', '#0bda05'], ['24.45546397 - 25.76239696', '#55e400'], ['25.76239697 - 27.06932995', '#9ff000'], ['27.06932996 - 28.37626295', '#effb00'], ['28.37626296 - 30.00992919', '#fbe606'], ['30.0099292 - 31.64359544', '#f5c60e'], ['31.64359545 - 33.93072818', '#eeab13'], ['33.93072819 - 35.89112767', '#e79019'], ['35.89112768 - 40.13865991', '#d97624'], ['40.13865992 - 57.78225534', '#cc612f'], ['57.78225535 - 97.31697845', '#c44f3c']];
define('toc-panel', `:host{display:flex;flex-direction:column;width:264px;flex:none}
.tools{display:flex;align-items:center;height:26px;padding-left:4px;background:linear-gradient(#fdfdfd,#ececec);flex:none}
.tree{flex:1;min-height:0;border:1px solid #828790;background:#fff;display:flex;flex-direction:column;margin-right:1px;overflow:hidden}
.list{flex:1;padding-top:1px;overflow:hidden}.p{height:20px;padding:2px 0 0 101px;white-space:nowrap}
.sb{height:16px;margin:0 1px 5px;background:#f0f0f0;display:flex;align-items:center;color:#555;padding:0 5px 0 4px;gap:4px;box-shadow:0 4px #f0f0f0}.sb ui-icon{width:9px;height:9px}.sb i{width:124px;height:15px;background:#cdcdcd;margin-right:auto}`,
  `<panel-title>内容列表</panel-title><div class="tools">${tb('bydraw *bysrc byvis bysel | opts')}</div>
<div class="tree"><div class="list"><tree-row icon="layers" bold>图层</tree-row><tree-row icon="db" style="padding-left:27px">E:\\</tree-row><tree-row icon="group" style="padding-left:46px">基础数据</tree-row>
<tree-row check="on" style="padding-left:65px">沿河步行线</tree-row><tree-symbol leaf="line" style="--c:#f00"></tree-symbol>
<tree-row check="on" style="padding-left:65px">建筑_沿江打断后</tree-row><tree-symbol leaf="fill" style="--c:#cbd2f7"></tree-symbol>
<tree-row check="on" style="padding-left:65px">河流</tree-row><tree-symbol leaf="fill" style="--c:#00256e"></tree-symbol>
<tree-row check="off" style="padding-left:65px">游园</tree-row><tree-symbol leaf="park" style="--c:#659b4c"></tree-symbol>
<tree-row check="on" style="padding-left:46px">栅格地表面_沿江建筑打断后</tree-row><div class="p">试_&lt;VALUE&gt;___验/试_&lt;None</div>
${CLASSES.map(([t, c]) => `<tree-symbol style="--c:${c}">${t}</tree-symbol>`).join('')}</div>
<div class="sb"><ui-icon name="chl"></ui-icon><i></i><ui-icon name="chr"></ui-icon></div></div>`);

/* ---------- map ---------- */
define('map-view', `:host{flex:1;min-width:0;display:flex;flex-direction:column;border:2px solid;border-color:#696969 #fff #fff #696969;background:#fff}
.m{flex:1}.b{height:20px;border-top:1px solid #e3e3e3;background:#f0f0f0;display:flex;align-items:flex-start;flex:none}
button{width:17px;height:15px;border:0;padding:0;background:none;display:grid;place-items:center}button.on{background:#bcdcf4;border:1px solid #90c8f6}button ui-icon{width:11px;height:11px}
s{width:1px;height:13px;background:#888;margin:0 5px 0 2px}.t{flex:1;height:18px;background:#cdcdcd;margin:0 6px 0 3px}.c{width:9px;height:9px;color:#555;margin-top:5px}`,
  '<div class="m"></div><div class="b"><button class="on" type="button" aria-label="data"><ui-icon name="mapv"></ui-icon></button><button type="button" aria-label="layout"><ui-icon name="lay"></ui-icon></button><s></s><button type="button" aria-label="refresh"><ui-icon name="rfr"></ui-icon></button><button type="button" aria-label="pause"><ui-icon name="pause"></ui-icon></button><ui-icon class="c" name="chl" style="margin-left:4px"></ui-icon><span class="t"></span><ui-icon class="c" name="chr"></ui-icon></div>');

/* ---------- search panel ---------- */
define('result-item', `:host{display:flex;height:56px;padding:0 4px 0 4px;gap:4px;font-family:"DejaVu Sans","Noto Sans CJK SC",sans-serif;overflow:hidden}
:host([alt]){background:#ededed}ui-icon{width:18px;height:18px}
.b{flex:1;min-width:0}.t{font-size:12px;line-height:16px;color:#0a63cc;white-space:nowrap}.t a{color:inherit;text-decoration:none}em{font-style:normal;color:#008000}
.d,.p{font-size:11px;line-height:14px;white-space:nowrap;color:#0f2f6b}.p{color:#008000;line-height:15px}
:host([hot]) .d{border-bottom:1px solid #0f2f6b}`,
  '<ui-icon name="hammer"></ui-icon><div class="b"><div class="t"><a href="#"><slot name="t"></slot></a> <em>(工具)</em></div><div class="d"><slot name="d"></slot></div><div class="p"><slot name="p"></slot></div></div>');
define('search-panel', `:host{display:flex;flex-direction:column;width:300px;flex:none}
.tools{display:flex;align-items:center;height:28px;padding:0 1px;flex:none}
.tools s{width:1px;height:24px;background:#999;margin:0 2px 0 3px}
.w{flex:1;min-height:0;display:flex}.l{flex:1;display:flex;flex-direction:column;min-width:0}
.c{flex:1;background:#fff;border-top:1px solid #b4b4b4;border-bottom:1px solid #b4b4b4;font-family:"DejaVu Sans","Noto Sans CJK SC",sans-serif}
.foot{height:18px;flex:none;color:#f00;font-size:9px;line-height:21px;padding-left:139px}
.sc{width:16px;background:#f8f8f8;display:flex;flex-direction:column;justify-content:space-between;padding:15px 0 14px 2px;color:#bcbcbc}.sc ui-icon{width:12px;height:12px}
nav{display:flex;gap:19px;padding:6px 0 0 10px;font-size:9px;line-height:16px;font-weight:bold}nav a,.lk a{color:#0a63cc;font-weight:normal}
.q{display:flex;gap:10px;padding:3px 0 0 9px;align-items:center}.f{position:relative;width:220px}
.q input{width:100%;height:23px;border:2px solid;border-color:#696969 #aaa #aaa #696969;font-size:13px;padding:0 20px 0 2px;color:#14146e;display:block}
.f button{position:absolute;right:5px;top:6px;width:11px;height:11px;border:0;background:none;padding:0;color:#14146e}.f ui-icon{width:11px;height:11px;display:block}
.go{width:21px;height:21px;padding:0;border:0;background:none}.go ui-icon{width:21px;height:21px;display:block}
.lk{display:flex;align-items:center;gap:2px;font-size:10px;line-height:14px;padding-left:9px}.lk ui-icon{width:12px;height:12px;color:#222}
.band{height:24px;background:#f0f0f0;border:solid #bbb;border-width:1px 0;margin-top:12px;font-size:9px;padding-right:11px}.band span{flex:1;display:flex;gap:2px;align-items:center}`,
  `<panel-title live>搜索</panel-title><div class="tools">${tb('back fwd')}<s></s>${tb('home refresh')}<s></s>${tb('opts')}<ui-icon name="down" style="width:15px;height:15px;margin:0 5px 0 0"></ui-icon><drop-down kind="btn" value="本地搜索" style="flex:1"></drop-down></div>
<div class="w"><div class="l"><div class="c"><nav><span>全部</span><a href="#">地图</a><a href="#">数据</a><a href="#">工具</a><a href="#">图像</a></nav>
<div class="q"><div class="f"><input aria-label="search" value="增密"><button type="button" aria-label="clear"><ui-icon name="x"></ui-icon></button></div><button class="go" type="button" aria-label="go"><ui-icon name="mag"></ui-icon></button></div>
<div class="lk" style="margin-top:4px"><a href="#">任何范围</a><ui-icon name="down"></ui-icon></div>
<div class="lk band"><span><a href="#">返回的搜索结果 3 项</a><ui-icon name="down"></ui-icon></span><a href="#">排序方式</a><ui-icon name="down"></ui-icon></div>
<result-item hot><span slot="t"><b>增密</b> (编辑)</span><span slot="d">沿线或多边形要素添加折点。还可将曲线线段（贝...</span><span slot="p">工具箱\\系统工具箱\\editing tools.tbx\\<b>增密</b></span></result-item>
<result-item alt><span slot="t"><b>增密</b>采样网络 (地统计分析)</span><span slot="d">使用预定义的地统计克里金图层来确定新监测站的...</span><span slot="p">工具箱\\系统工具箱\\geostatistical analyst tool...</span></result-item>
<result-item><span slot="t">面插值为多面体 (3D Analyst)</span><span slot="d">使用栅格、terrain 或 TIN 表面从面要素类创建...</span><span slot="p">工具箱\\系统工具箱\\3d analyst tools.tbx\\表面...</span></result-item>
</div><div class="foot">1</div></div><div class="sc"><ui-icon name="chu"></ui-icon><ui-icon name="chd"></ui-icon></div></div>`);
define('side-tab', ':host{display:block}button{width:100%;height:52px;border:1px solid #999;border-right:0;border-radius:4px 0 0 4px;background:#f4f4f4;padding:3px 0 0;display:flex;flex-direction:column;gap:3px;color:#555;align-items:center;white-space:nowrap}span{writing-mode:vertical-rl;text-orientation:sideways;font-size:12px;line-height:16px}',
  el => `<button type="button"><ui-icon name="${el.getAttribute('icon')}"></ui-icon><span><slot></slot></span></button>`);

/* ---------- geoprocessing dialog ---------- */
define('tool-dialog', `:host{position:absolute;left:666px;top:238px;width:926px;height:507px;border:1px solid #a5a5a5;background:#f0f0f0;box-shadow:0 2px 12px rgba(0,0,0,.32);display:flex;flex-direction:column;font:14px/20px "Liberation Mono","Noto Sans CJK SC",monospace}
header{height:37px;background:#fff;display:flex;align-items:center;padding:0 4px 0 8px;color:#999;gap:5px;flex:none;font:15px/20px "Noto Sans","Noto Sans CJK SC",sans-serif}header ui-icon.h{width:20px;height:20px;background:none}header span{flex:1}
header button{width:54px;height:30px;border:0;background:none;padding:0;display:grid;place-items:center}header button ui-icon{width:16px;height:16px}
main{flex:1;display:flex;gap:4px;min-height:0;padding:0 2px 0 1px}
.pane{border:2px solid;border-color:#696969 #e3e3e3 #e3e3e3 #696969;display:flex}.a{flex:1}.h{width:237px;background:#fff;flex:none}
.sc{width:16px;background:#f9f9f9;display:flex;flex-direction:column;justify-content:space-between;padding:16px 0 14px 2px;color:#bcbcbc;flex:none}.sc ui-icon{width:12px;height:12px}
.form{flex:1;padding:11px 11px 0 18px;display:flex;flex-direction:column}
.form>label,.form>p{margin:0;height:20px;display:block;padding-top:1px}.g{display:flex;gap:15px;align-items:center;height:24px}
.cb{position:relative;flex:1}.cb select{appearance:none;width:100%;height:24px;border:0;border-top:2px solid #777;border-left:2px solid #777;background:#fff;padding:0 18px 4px 1px;border-radius:0;display:block}
.cb i{position:absolute;right:1px;top:2px;width:17px;height:20px;background:#f0f0f0;border:solid #888;border-width:0 0 1px}.cb i ui-icon{width:16px;height:16px;margin:1px 0;display:block;color:#000}
.br{width:26px;height:30px;border:1px solid #adadad;background:#e1e1e1;padding:0;display:grid;place-items:center;margin:0 1px 0 -4px}
.form>.ra{display:flex;align-items:center;gap:4px;padding:0;font-size:13px}.ra input{appearance:none;width:16px;height:16px;border:1px solid #333;border-radius:50%;background:#fff;margin:0}.ra input:checked{background:radial-gradient(#333 0 4px,#333 5px,#fff 6px)}
.g input{flex:1;min-width:0;height:24px;border:1px solid #7a7a7a;background:#fff;text-align:right;padding:0 4px;border-radius:0}.g input:disabled{border-color:#ccc;background:#f0f0f0;color:#777;box-shadow:inset 0 0 0 1px #fff}
drop-down{width:158px;height:23px}
.help{flex:1;padding:7px 11px 0 17px;font:13px/16px "Noto Sans","Noto Sans CJK SC",sans-serif}.help h2{font-size:16px;line-height:20px;margin:0 0 17px;white-space:pre}.help p{margin:0}
footer{height:53px;display:flex;align-items:flex-start;gap:7px;padding:12px 108px 0 0;justify-content:flex-end;flex:none;font-family:"Noto Sans","Noto Sans CJK SC",sans-serif}footer button{height:26px;border:1px solid #adadad;background:#e1e1e1;padding:0}`,
  `<header><ui-icon class="h" name="hammer"></ui-icon><span>增密</span><button type="button" aria-label="min"><ui-icon name="min"></ui-icon></button><button type="button" aria-label="max"><ui-icon name="max"></ui-icon></button><button type="button" aria-label="close"><ui-icon name="thinx"></ui-icon></button></header>
<main><section class="pane a"><div class="form"><label for="f">输入要素</label><div class="g" style="margin:3px 0 7px"><div class="cb"><select id="f"><option>沿河步行线</option></select><i><ui-icon name="down"></ui-icon></i></div><button class="br" type="button" aria-label="browse"><ui-icon name="open"></ui-icon></button></div>
<p>增密方法 (可选)</p><label class="ra"><input type="radio" name="m" checked>DISTANCE</label><label class="ra"><input type="radio" name="m">OFFSET</label><label class="ra"><input type="radio" name="m">ANGLE</label>
<label for="d">距离 (可选)</label><div class="g"><input id="d" value="5"><drop-down kind="btn" value="米"></drop-down></div>
<label for="o">最大偏移偏差 (可选)</label><div class="g"><input id="o" value="0.1" disabled><drop-down kind="off" value="米" disabled></drop-down></div>
<label for="r">最大偏转角(度) (可选)</label><div class="g"><input id="r" value="10" disabled></div></div>
<div class="sc"><ui-icon name="chu"></ui-icon><ui-icon name="chd"></ui-icon></div></section>
<section class="pane h"><div class="help"><h2>距离  (可选)</h2><p>折点间的最大线性距离。此距离始终应用于线段，并用来简化曲线。默认值是关于数据的 xy 容差的函数。</p></div><div class="sc"><ui-icon name="chu"></ui-icon><ui-icon name="chd"></ui-icon></div></section></main>
<footer><button type="button" style="width:87px">确定</button><button type="button" style="width:87px">取消</button><button type="button" style="width:103px">环境...</button><button type="button" style="width:112px">&lt;&lt; 隐藏帮助</button><button type="button" style="width:117px;margin-left:16px">工具帮助</button></footer>`);

define('status-bar', ':host{display:flex;height:22px;flex:none;justify-content:flex-end;gap:2px;padding-top:3px}i{display:block;border:1px solid #f7f7f7;height:19px}span{width:285px;border:1px solid #f7f7f7;padding-left:3px;line-height:17px;white-space:pre}',
  '<i style="width:127px"></i><i style="width:17px"></i><span><slot></slot></span>');
define('red-mark', ':host{position:absolute;border:1px solid #ed1c24;pointer-events:none;box-sizing:border-box}', '');
define('note-text', ':host{position:absolute;font:23px/30px "Noto Sans","Noto Sans CJK SC",sans-serif;color:#3f48cc;white-space:nowrap}', '<slot></slot>');

define('arc-app', `:host{display:flex;flex-direction:column;height:100vh;position:relative;overflow:hidden;background:linear-gradient(90deg,#f0f0f0,#f9f9f9 75%)}
.main{flex:1;min-height:0;display:flex;gap:4px}.side{width:20px;flex:none;padding-top:2px;margin-left:-2px;background:#f9f9f9}
.wm{position:absolute;left:1673px;top:995px;font:20px/30px "Noto Sans CJK SC",sans-serif;color:rgba(130,130,130,.85);text-shadow:1px 1px rgba(255,255,255,.6);white-space:nowrap}
.bird{position:absolute;left:1813px;top:536px;width:69px;height:69px}status-bar{background:#f0f0f0}`,
  `<app-title>观景线路视域分析.mxd - ArcMap</app-title><app-menu></app-menu><app-toolbars></app-toolbars>
<div class="main"><toc-panel></toc-panel><map-view></map-view><search-panel></search-panel><div class="side"><side-tab icon="wcat">目录</side-tab><side-tab icon="wsearch">搜索</side-tab></div></div>
<status-bar>1125.984  1192.488 米</status-bar>
<tool-dialog></tool-dialog>
<red-mark style="left:691px;top:310px;width:233px;height:28px"></red-mark>
<red-mark style="left:1072px;top:440px;width:81px;height:26px"></red-mark>
<red-mark style="left:927px;top:694px;width:98px;height:42px"></red-mark>
<red-mark style="left:1600px;top:242px;width:294px;height:132px"></red-mark>
<red-mark style="left:1890px;top:219px;width:32px;height:74px"></red-mark>
<note-text style="left:900px;top:281px">2.选择沿河步行线为输入要素</note-text>
<note-text style="left:1039px;top:420px">3.输入5</note-text>
<note-text style="left:924px;top:661px">4.点击确定</note-text>
<note-text style="left:1495px;top:494px">1.在搜索面板中输入增密，点击增密工具</note-text>
<ui-icon class="bird" name="bird"></ui-icon>
<div class="wm">CSDN @关于作业的二三事</div>`);
</script>
</body>
</html>
